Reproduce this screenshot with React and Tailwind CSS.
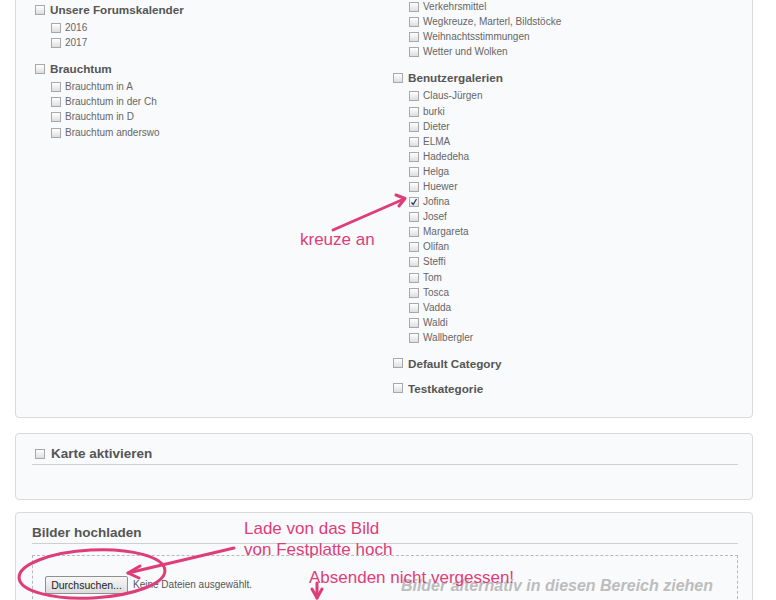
import React from "react";

const Cb = ({ checked }) => (
  <span className="relative inline-flex items-center justify-center w-[10px] h-[10px] shrink-0 border border-[#a8a8a8] bg-linear-to-b from-white to-[#dedede]">
    {checked && (
      <svg width="8" height="8" viewBox="0 0 8 8" className="absolute left-[0px] top-[0px]">
        <path d="M1.5 4.5 L3.2 6.5 L6.5 1" fill="none" stroke="#2a3566" strokeWidth="1.3" />
      </svg>
    )}
  </span>
);

const Heading = ({ children }) => (
  <div className="h-[18px] flex items-center">
    <Cb />
    <span className="ml-[5px] text-[11.7px] font-bold text-[#555] leading-none">{children}</span>
  </div>
);

const Children = ({ items, checked = [] }) => (
  <div className="pt-[2px] pb-[2px]">
    {items.map((t) => (
      <div key={t} className="h-[15.1px] flex items-center pl-[16px]">
        <Cb checked={checked.includes(t)} />
        <span className="ml-[4px] text-[10px] text-[#666] leading-none">{t}</span>
      </div>
    ))}
  </div>
);

const Group = ({ title, items, checked }) => (
  <div className="mb-[7px]">
    {title && <Heading>{title}</Heading>}
    {items && <Children items={items} checked={checked} />}
  </div>
);

export default function App() {
  return (
    <div className="relative w-[776px] h-[600px] overflow-hidden bg-white font-['Liberation_Sans',Arial,sans-serif]">
      <div className="pl-[15px]">
        {/* Panel 1 */}
        <div className="w-[738px] -mt-[20px] pt-[16.5px] pb-[13px] pl-[19px] border border-[#dadada] rounded-[4px] bg-[#f9fafb]">
          <div className="grid grid-cols-[358px_1fr]">
            <div className="pt-[3px]">
              <Group title="Unsere Forumskalender" items={["2016", "2017"]} />
              <Group title="Brauchtum" items={["Brauchtum in A", "Brauchtum in der Ch", "Brauchtum in D", "Brauchtum anderswo"]} />
            </div>
            <div>
              <Group
                items={["Verkehrsmittel", "Wegkreuze, Marterl, Bildstöcke", "Weihnachtsstimmungen", "Wetter und Wolken"]}
              />
              <Group
                title="Benutzergalerien"
                items={["Claus-Jürgen", "burki", "Dieter", "ELMA", "Hadedeha", "Helga", "Huewer", "Jofina", "Josef", "Margareta", "Olifan", "Steffi", "Tom", "Tosca", "Vadda", "Waldi", "Wallbergler"]}
                checked={["Jofina"]}
              />
              <Group title="Default Category" />
              <Group title="Testkategorie" />
            </div>
          </div>
        </div>

        {/* Panel 2 */}
        <div className="w-[738px] h-[67px] mt-[15px] pt-[9px] pl-[16px] pr-[14px] border border-[#dadada] rounded-[4px] bg-[#f9fafb]">
          <div className="h-[22px] flex items-center border-b border-[#cfcfcf]">
            <span className="ml-[3px]"><Cb /></span>
            <span className="ml-[6px] text-[13.5px] font-bold text-[#555] leading-none">Karte aktivieren</span>
          </div>
        </div>

        {/* Panel 3 */}
        <div className="w-[738px] h-[120px] mt-[12px] pt-[8px] pl-[16px] pr-[14px] border border-[#dadada] rounded-[4px] bg-[#f9fafb]">
          <div className="h-[23px] flex items-center border-b border-[#cfcfcf]">
            <span className="text-[13.5px] font-bold text-[#555] leading-none">Bilder hochladen</span>
          </div>
          <div className="mt-[11px] h-[80px] border border-dashed border-[#b8b8b8] pl-[12px] pt-[20px] pr-[24px] flex items-start justify-between">
            <div className="flex items-center">
              <span className="w-[83px] h-[18px] flex items-center justify-center border border-[#8f8f8f] rounded-[2px] bg-linear-to-b from-[#f7f7f7] to-[#dcdcdc] text-[10.5px] text-[#222] leading-none">
                Durchsuchen...
              </span>
              <span className="ml-[5px] text-[10px] text-[#555] leading-none">Keine Dateien ausgewählt.</span>
            </div>
            <span className="mt-[2px] text-[16px] font-bold italic text-[#bdbdbd] leading-none">
              Bilder alternativ in diesen Bereich ziehen
            </span>
          </div>
        </div>
      </div>

      {/* Annotations overlay */}
      <div className="absolute left-[300px] top-[229px] text-[17px] leading-[21px] text-[#de3d79]">kreuze an</div>
      <div className="absolute left-[244px] top-[518px] text-[17px] leading-[21px] text-[#de3d79]">
        Lade von das Bild
        <br />
        von Festplatte hoch
      </div>
      <div className="absolute left-[309px] top-[567px] text-[17px] leading-[21px] text-[#de3d79]">Absenden nicht vergessen!</div>

      <svg className="absolute left-0 top-0 pointer-events-none" width="776" height="600" viewBox="0 0 776 600">
        <g fill="none" stroke="#de3d79" strokeWidth="3" strokeLinecap="round" strokeLinejoin="round">
          <path d="M333 230 L404 199" />
          <path d="M396 195 L405 198.5 L399 206" />
          <ellipse cx="92" cy="574" rx="73" ry="24" transform="rotate(-3 92 574)" />
          <path d="M234 548 L128 573" />
          <path d="M140 566 L128 573 L139 578" />
          <path d="M317 583 L317 598" />
          <path d="M312 589 L317 598 L322 589" />
        </g>
      </svg>
    </div>
  );
}
